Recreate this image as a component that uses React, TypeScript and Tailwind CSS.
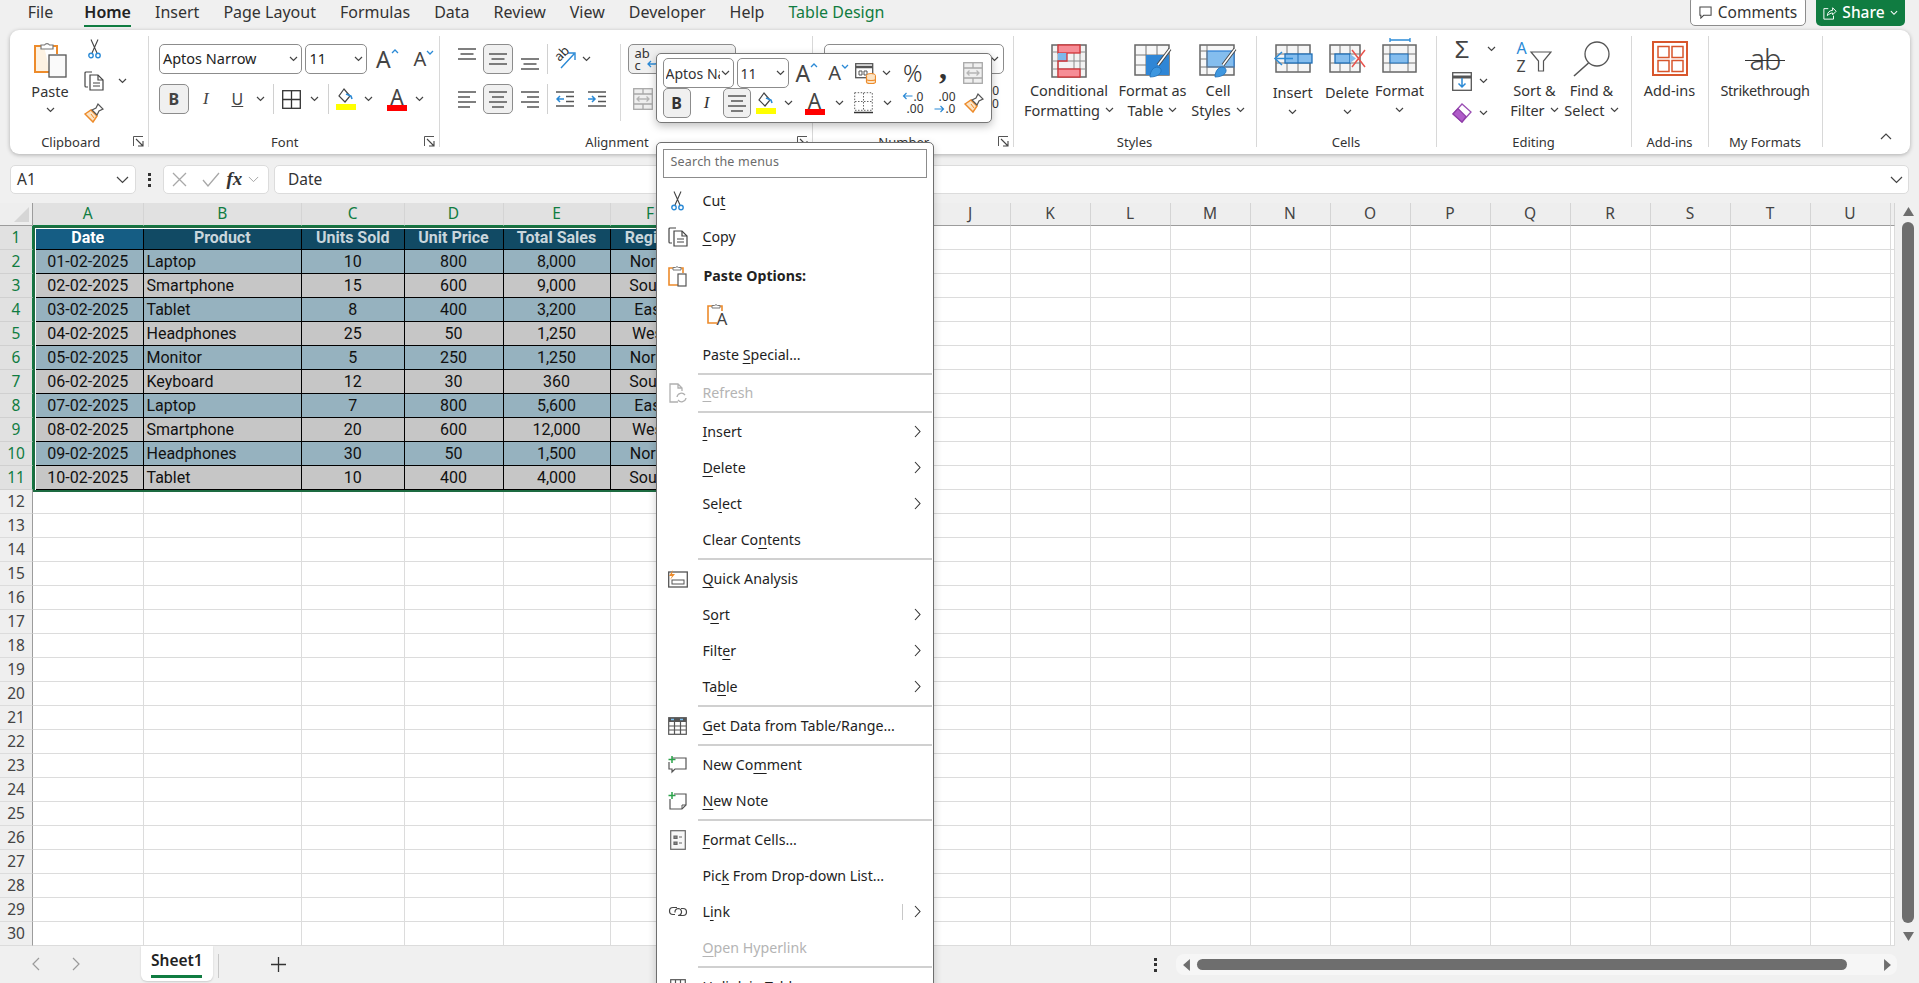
import React from "react";

type P = { className?: string; children?: React.ReactNode };

const BLUE = "#2b8ad6";
const OR = "#ed8b2b";

function Chev({ className = "" }: P) {
  return (
    <svg viewBox="0 0 9 6" className={"w-[9px] h-[6px] shrink-0 " + className}>
      <path d="M1 1l3.500 3.500L8 1" fill="none" stroke="#444" strokeWidth="1.200" />
    </svg>
  );
}
function S({ className = "", children }: P) {
  return <div className={"flex items-center justify-center shrink-0 h-[30px] " + className}>{children}</div>;
}
function Sep({ className = "h-[30px]" }: P) {
  return <div className={"w-[1px] bg-[#d0d0d0] shrink-0 " + className} />;
}
function Btn({ className = "", children }: P) {
  return <div className={"flex items-center justify-center shrink-0 h-[30px] rounded-[5px] border border-[#8c8c8c] bg-[#f0f0f0] " + className}>{children}</div>;
}

function PasteBig() {
  return (
    <svg viewBox="0 0 34 37" className="w-[34px] h-[37px]">
      <path d="M11 5H2v26h15" fill="#fdf2e2" stroke={OR} strokeWidth="2" />
      <path d="M18 5h6v8" fill="none" stroke={OR} strokeWidth="2" />
      <path d="M8 8V4h3.500a3 3 0 0 1 5 0H20v4z" fill="#fff" stroke="#777" strokeWidth="1.200" />
      <rect x="16" y="14" width="17" height="22" fill="#fafafa" stroke="#555" strokeWidth="1.300" />
    </svg>
  );
}
function Scissors({ className = "w-[13px] h-[20px]" }: P) {
  return (
    <svg viewBox="0 0 13 20" className={className}>
      <path d="M3 0.500L9 14M10 0.500L4 14" fill="none" stroke="#444" strokeWidth="1.100" />
      <circle cx="3" cy="16.500" r="2.200" fill="none" stroke={BLUE} strokeWidth="1.400" />
      <circle cx="10" cy="16.500" r="2.200" fill="none" stroke={BLUE} strokeWidth="1.400" />
    </svg>
  );
}
function Copy({ className = "w-[20px] h-[20px]" }: P) {
  return (
    <svg viewBox="0 0 20 20" className={className} fill="none" stroke="#444" strokeWidth="1.200">
      <path d="M8 1H2a1 1 0 0 0-1 1v13a1 1 0 0 0 1 1h2" />
      <path d="M6 4h8l5 5v10H6z" fill="#fff" />
      <path d="M14 4v5h5M9 12h7M9 15h7" />
    </svg>
  );
}
function Painter({ className = "w-[20px] h-[20px]" }: P) {
  return (
    <svg viewBox="0 0 20 20" className={className}>
      <path d="M1 11l6-4 6 6-4 6z" fill="#fbe3c4" stroke={OR} strokeWidth="1.500" />
      <path d="M4 14l3 3M7 11l3 4" stroke={OR} strokeWidth="1" />
      <path d="M8 7l4-2 2-4 5 5-4 2-2 4z" fill="#fff" stroke="#555" strokeWidth="1.200" />
    </svg>
  );
}
function Launcher() {
  return (
    <svg viewBox="0 0 11 11" className="w-[11px] h-[11px]" fill="none" stroke="#555" strokeWidth="1">
      <path d="M0.500 10V0.500H10" />
      <path d="M3 3l6.500 6.500M10 5v5H5" stroke="#444" strokeWidth="1.100" />
    </svg>
  );
}
function GrowA({ up, size = "text-[23px]", className = "" }: { up: boolean; size?: string; className?: string }) {
  return (
    <div className={"flex items-start " + className}>
      <span className={"leading-none text-[#444] " + size}>A</span>
      <svg viewBox="0 0 8 5" className="w-[8px] h-[5px] mt-[1px]">
        <path d={up ? "M1 4l3-3 3 3" : "M1 1l3 3 3-3"} fill="none" stroke={BLUE} strokeWidth="1.300" />
      </svg>
    </div>
  );
}
function Borders({ className = "w-[19px] h-[19px]" }: P) {
  return (
    <svg viewBox="0 0 19 19" className={className} fill="none" stroke="#333" strokeWidth="1.300">
      <rect x="0.700" y="0.700" width="17.600" height="17.600" />
      <path d="M9.500 1v17M1 9.500h17" />
    </svg>
  );
}
function DottedBorders() {
  return (
    <svg viewBox="0 0 19 22" className="w-[19px] h-[22px]" fill="none" stroke="#666" strokeWidth="1" strokeDasharray="1.500 1.500">
      <rect x="0.700" y="0.700" width="17.600" height="17.600" />
      <path d="M9.500 1v17M1 9.500h17" />
      <path d="M0 20.500h19" strokeDasharray="0" strokeWidth="1.500" stroke="#333" />
    </svg>
  );
}
function Fill() {
  return (
    <svg viewBox="0 0 20 22" className="w-[20px] h-[22px]">
      <path d="M8 1l-5 7 6 6 5-6z" fill="#fff" stroke="#444" strokeWidth="1.200" />
      <path d="M10 6l5 2 1 3" fill="none" stroke={BLUE} strokeWidth="1.600" />
      <rect x="0" y="16" width="20" height="6" fill="#ffff00" />
    </svg>
  );
}
function ColorA() {
  return (
    <div className="flex flex-col items-center w-[20px]">
      <span className="text-[21px] leading-[20px] h-[17px] text-[#444]">A</span>
      <div className="w-[20px] h-[6px] bg-[#ff0000] mt-[1px]" />
    </div>
  );
}
function Lines({ kind }: { kind: "top" | "mid" | "bot" | "l" | "c" | "r" }) {
  if (kind === "top" || kind === "mid" || kind === "bot") {
    return (
      <svg viewBox="0 0 18 12" className="w-[18px] h-[12px]" stroke="#555" strokeWidth="1.300">
        <path d="M0 1h18M2.500 6h13M0 11h18" />
      </svg>
    );
  }
  const d =
    kind === "l" ? "M0 1h18M0 6h12M0 11h18M0 16h12" : kind === "c" ? "M0 1h18M3 6h12M0 11h18M3 16h12" : "M0 1h18M6 6h12M0 11h18M6 16h12";
  return (
    <svg viewBox="0 0 18 17" className="w-[18px] h-[17px]" stroke="#555" strokeWidth="1.300">
      <path d={d} />
    </svg>
  );
}
function Orient() {
  return (
    <div className="relative w-[22px] h-[20px]">
      <span className="absolute left-[0px] top-[-2px] text-[13px] leading-none text-[#333] -rotate-45">ab</span>
      <svg viewBox="0 0 22 20" className="w-[22px] h-[20px]">
        <path d="M7 19L20 5M14 4h7v7" fill="none" stroke={BLUE} strokeWidth="1.400" />
      </svg>
    </div>
  );
}
function Indent({ out }: { out?: boolean }) {
  return (
    <svg viewBox="0 0 18 16" className="w-[18px] h-[16px]">
      <path d="M0 1h18M10 5.500h8M10 10.500h8M0 15h18" stroke="#555" strokeWidth="1.300" />
      <path d={out ? "M8 8H1M4 5L1 8l3 3" : "M0 8h7M4 5l3 3-3 3"} fill="none" stroke={BLUE} strokeWidth="1.500" />
    </svg>
  );
}
function Merge() {
  return (
    <svg viewBox="0 0 20 22" className="w-[20px] h-[22px]" fill="none" stroke="#a8a8a8" strokeWidth="1.300">
      <rect x="0.700" y="0.700" width="18.600" height="20.600" fill="#efefef" />
      <path d="M1 6h18M1 16h18M10 1v5M10 16v5" />
      <path d="M4 11h12M6.500 8.500L4 11l2.500 2.500M13.500 8.500L16 11l-2.500 2.500" stroke="#b5b5b5" />
    </svg>
  );
}
function CondFmt() {
  return (
    <svg viewBox="0 0 36 34" className="w-[36px] h-[34px]" fill="none">
      <rect x="1" y="1" width="34" height="32" fill="#f3f3f3" stroke="#666" strokeWidth="1.500" />
      <path d="M7 1v32M29 1v32M23 1v32M1 8h34M1 17h34M1 25h34" stroke="#8a8a8a" />
      <rect x="7" y="1" width="22" height="8" fill="#f68d96" stroke="#d13438" strokeWidth="1.300" />
      <rect x="7" y="25" width="22" height="8" fill="#f68d96" stroke="#d13438" strokeWidth="1.300" />
      <rect x="7" y="9" width="9" height="8" fill="#7db8ea" />
      <path d="M16 9v8H7v8" stroke="#d13438" strokeWidth="1.300" />
    </svg>
  );
}
function FmtTable({ big }: { big?: boolean }) {
  return (
    <svg viewBox="0 0 38 36" className="w-[38px] h-[36px]" fill="none">
      <rect x="1" y="1" width="34" height="30" fill="#f7f7f7" stroke="#666" strokeWidth="1.500" />
      {big ? (
        <rect x="8" y="7" width="27" height="16" fill="#84bdee" stroke="#2b7cd3" strokeWidth="1.200" />
      ) : (
        <>
          <path d="M12 1v30M23 1v30M1 11h34M1 21h34" stroke="#777" />
          <rect x="12" y="11" width="23" height="20" fill="#2f86d6" />
        </>
      )}
      {big && <path d="M8 1v30M1 7h7M1 15h7M1 23h34" stroke="#777" />}
      <path d="M36 5L24 21" stroke="#444" strokeWidth="3.500" />
      <path d="M36 5L24 21" stroke="#fff" strokeWidth="1.500" />
      <path d="M16 33c0-7 5-12 10-9 3 3 0 9-10 9z" fill="#3e97e0" stroke="#1f6fb7" strokeWidth="0.800" />
    </svg>
  );
}
function InsertI() {
  return (
    <svg viewBox="0 0 40 29" className="w-[40px] h-[29px]" fill="none">
      <rect x="3" y="1" width="34" height="27" fill="#f5f5f5" stroke="#666" strokeWidth="1.500" />
      <path d="M14 1v27M25 1v27M3 10h34M3 19h34" stroke="#777" />
      <rect x="12" y="10" width="27" height="9" fill="#84bdee" stroke="#1f6fb7" strokeWidth="1.300" />
      <path d="M25 10v9" stroke="#1f6fb7" />
      <path d="M20 14.500H4M9 8l-7 6.500L9 21" stroke="#2b8ad6" strokeWidth="1.500" />
    </svg>
  );
}
function DeleteI() {
  return (
    <svg viewBox="0 0 37 29" className="w-[37px] h-[29px]" fill="none">
      <rect x="1" y="1" width="30" height="27" fill="#f5f5f5" stroke="#666" strokeWidth="1.500" />
      <path d="M11 1v27M21 1v27M1 10h30M1 19h30" stroke="#777" />
      <rect x="6" y="10" width="15" height="9" fill="#84bdee" stroke="#1f6fb7" strokeWidth="1.300" />
      <path d="M21 10l6 4.500-6 4.500z" fill="#84bdee" />
      <path d="M23 6l13 17M36 6L23 23" stroke="#e8534d" strokeWidth="1.500" />
    </svg>
  );
}
function FormatI() {
  return (
    <svg viewBox="0 0 35 35" className="w-[35px] h-[35px]" fill="none">
      <path d="M8 2h20M8 0v4M28 0v4" stroke={BLUE} strokeWidth="1.300" />
      <rect x="1" y="7" width="33" height="27" fill="#f5f5f5" stroke="#666" strokeWidth="1.500" />
      <path d="M8 7v27M26 7v27M1 16h33M1 25h33" stroke="#777" />
      <rect x="8" y="16" width="18" height="9" fill="#84bdee" stroke="#1f6fb7" />
    </svg>
  );
}
function Sigma() {
  return <span className="text-[24px] leading-[20px] text-[#444] font-['Liberation_Sans',sans-serif]">Σ</span>;
}
function FillDown() {
  return (
    <svg viewBox="0 0 20 19" className="w-[20px] h-[19px]" fill="none">
      <rect x="0.700" y="0.700" width="18.600" height="17.600" stroke="#555" strokeWidth="1.300" />
      <path d="M1 5h18" stroke="#555" strokeWidth="3" />
      <path d="M10 6v9M6.500 11.500L10 15l3.500-3.500" stroke={BLUE} strokeWidth="1.500" />
    </svg>
  );
}
function Eraser() {
  return (
    <svg viewBox="0 0 20 20" className="w-[20px] h-[20px]">
      <path d="M1 11l9-10 9 8-9 10z" fill="#fff" stroke="#9a4eb3" strokeWidth="1.300" />
      <path d="M1 11l5-5.500 8 8L10 19z" fill="#b05cc9" stroke="#8e3da8" strokeWidth="1.200" />
    </svg>
  );
}
function SortI() {
  return (
    <div className="relative w-[36px] h-[33px]">
      <span className="absolute left-[0px] top-[-3px] text-[16px] leading-[18px] text-[#2b8ad6]">A</span>
      <span className="absolute left-[0px] top-[15px] text-[16px] leading-[18px] text-[#444]">Z</span>
      <svg viewBox="0 0 36 33" className="w-[36px] h-[33px]" fill="none">
        <path d="M15 10h20l-7.500 9v10h-5V19z" fill="#fff" stroke="#555" strokeWidth="1.200" />
      </svg>
    </div>
  );
}
function Mag() {
  return (
    <svg viewBox="0 0 37 36" className="w-[37px] h-[36px]" fill="none">
      <circle cx="24" cy="13" r="12" fill="#fff" stroke="#555" strokeWidth="1.300" />
      <path d="M15.500 22L1 35" stroke="#555" strokeWidth="1.600" />
    </svg>
  );
}
function AddinsI() {
  return (
    <svg viewBox="0 0 36 35" className="w-[36px] h-[35px]" fill="none" stroke="#d8562c" strokeWidth="1.500">
      <rect x="1" y="1" width="34" height="33" strokeWidth="2" />
      <rect x="6" y="5.500" width="11" height="11" />
      <rect x="20" y="5.500" width="11" height="11" />
      <rect x="6" y="19.500" width="11" height="11" />
      <rect x="20" y="19.500" width="11" height="11" />
    </svg>
  );
}
function Strike() {
  return (
    <div className="relative w-[40px] h-[28px] flex items-center justify-center">
      <span className="text-[29px] leading-none text-[#444] tracking-[-1px] font-light">ab</span>
      <div className="absolute left-0 right-0 top-[16px] h-[1px] bg-[#333]" />
    </div>
  );
}
function XIcon() {
  return (
    <svg viewBox="0 0 15 15" className="w-[15px] h-[15px]" fill="none" stroke="#a8a8a8" strokeWidth="1.300">
      <path d="M1 1l13 13M14 1L1 14" />
    </svg>
  );
}
function Check() {
  return (
    <svg viewBox="0 0 18 15" className="w-[18px] h-[15px]" fill="none" stroke="#a8a8a8" strokeWidth="1.300">
      <path d="M1 8l5 6L17 1" />
    </svg>
  );
}
function VDots({ className = "" }: P) {
  return (
    <div className={"flex flex-col gap-[2.500px] " + className}>
      <div className="w-[3px] h-[3px] bg-[#333]" />
      <div className="w-[3px] h-[3px] bg-[#333]" />
      <div className="w-[3px] h-[3px] bg-[#333]" />
    </div>
  );
}

function Group({
  className,
  pad = "",
  label,
  labelCls = "",
  launcher,
  children,
}: {
  className: string;
  pad?: string;
  label?: string;
  labelCls?: string;
  launcher?: boolean;
  children?: React.ReactNode;
}) {
  return (
    <div className={"relative flex flex-col shrink-0 h-[111px] border-r border-[#d8d8d8] " + className}>
      <div className={"flex h-[96px] shrink-0 min-w-0 " + pad}>{children}</div>
      {label && <div className={"h-[15px] leading-[21px] text-center text-[13px] text-[#333] whitespace-nowrap " + labelCls}>{label}</div>}
      {launcher && (
        <div className="absolute right-[4px] bottom-[0px]">
          <Launcher />
        </div>
      )}
    </div>
  );
}

function Big({
  className,
  icon,
  l1,
  l2,
  chev,
  iconCls = "h-[44px] pt-[8px]",
  textCls = "",
}: {
  className: string;
  icon: React.ReactNode;
  l1: string;
  l2?: string;
  chev?: boolean;
  iconCls?: string;
  textCls?: string;
}) {
  return (
    <div className={"flex flex-col items-center shrink-0 text-[14.500px] text-[#333] " + className}>
      <div className={"flex items-start justify-center " + iconCls}>{icon}</div>
      <div className={"h-[20px] leading-[20px] whitespace-nowrap " + textCls}>{l1}</div>
      {l2 ? (
        <div className="h-[20px] leading-[20px] whitespace-nowrap flex items-center gap-[5px]">
          {l2}
          {chev && <Chev className="w-[8px]" />}
        </div>
      ) : (
        chev && (
          <div className="h-[20px] flex items-center">
            <Chev />
          </div>
        )
      )}
    </div>
  );
}

function Ribbon() {
  return (
    <div className="ml-[10px] mr-[9px] h-[124px] rounded-[9px] bg-white shadow-[0_1px_4px_rgba(0,0,0,0.28)] flex pt-[6px] shrink-0">
      <Group className="w-[138.500px]" label="Clipboard" labelCls="pr-[16px]" launcher>
        <div className="flex flex-col items-center w-[40px] ml-[20px] shrink-0 text-[14.500px] text-[#333]">
          <div className="mt-[5px] h-[37px]">
            <PasteBig />
          </div>
          <div className="mt-[3px] h-[20px] leading-[20px]">Paste</div>
          <div className="mt-[6px]">
            <Chev />
          </div>
        </div>
        <div className="flex flex-col ml-[14px] pt-[3px] items-start">
          <div className="h-[32px] w-[20px] flex justify-center">
            <Scissors />
          </div>
          <div className="h-[32px] flex items-start gap-[14px]">
            <Copy />
            <Chev className="mt-[7px]" />
          </div>
          <Painter />
        </div>
      </Group>

      <Group className="w-[291.500px]" pad="pl-[10.400px]" label="Font" labelCls="pr-[18px]" launcher>
        <div className="flex flex-col pt-[8px] gap-[10px]">
          <div className="flex items-center h-[30px]">
            <div className="w-[143.500px] h-[30px] rounded-[5px] border border-[#8c8c8c] flex items-center justify-between pl-[3px] pr-[3px] text-[14.500px] text-[#222]">
              Aptos Narrow
              <Chev />
            </div>
            <div className="ml-[3px] w-[61.500px] h-[30px] rounded-[5px] border border-[#8c8c8c] flex items-center justify-between pl-[3px] pr-[3px] text-[14.500px] text-[#222]">
              11
              <Chev />
            </div>
            <GrowA up className="ml-[9px]" />
            <GrowA up={false} size="text-[20px]" className="ml-[15px]" />
          </div>
          <div className="flex items-center h-[30px]">
            <Btn className="w-[30px] font-bold text-[16px] text-[#444]">B</Btn>
            <S className="w-[34px] italic text-[17px] text-[#444] font-['Liberation_Serif',serif]">I</S>
            <S className="w-[29px] underline text-[16px] text-[#444]">U</S>
            <S className="w-[18px]">
              <Chev />
            </S>
            <S className="w-[8px]">
              <Sep />
            </S>
            <S className="w-[27px]">
              <Borders />
            </S>
            <S className="w-[20px]">
              <Chev />
            </S>
            <S className="w-[7px]">
              <Sep />
            </S>
            <S className="w-[28px]">
              <Fill />
            </S>
            <S className="w-[18px]">
              <Chev />
            </S>
            <S className="w-[38px]">
              <ColorA />
            </S>
            <S className="w-[8px]">
              <Chev />
            </S>
          </div>
        </div>
      </Group>

      <Group className="w-[373px]" label="Alignment" labelCls="pr-[18px]" launcher>
        <div className="flex flex-col pt-[8px] gap-[10px] pl-[10px] w-[179.500px] shrink-0">
          <div className="flex items-center h-[30px]">
            <S className="w-[33px] pb-[10px]">
              <Lines kind="top" />
            </S>
            <Btn className="w-[30px]">
              <Lines kind="mid" />
            </Btn>
            <S className="w-[34px] pt-[10px]">
              <Lines kind="bot" />
            </S>
            <Sep />
            <S className="w-[34px]">
              <Orient />
            </S>
            <S className="w-[8px]">
              <Chev />
            </S>
          </div>
          <div className="flex items-center h-[30px]">
            <S className="w-[33px]">
              <Lines kind="l" />
            </S>
            <Btn className="w-[30px]">
              <Lines kind="c" />
            </Btn>
            <S className="w-[34px]">
              <Lines kind="r" />
            </S>
            <Sep />
            <S className="w-[33px]">
              <Indent out />
            </S>
            <S className="w-[32px]">
              <Indent />
            </S>
          </div>
        </div>
        <div className="mt-[8px] w-[1px] h-[77px] bg-[#d8d8d8] shrink-0" />
        <div className="flex flex-col pt-[8px] gap-[10px] pl-[7px]">
          <Btn className="w-[108px] justify-start pl-[6px] text-[13px] leading-[12px] text-[#333]">
            <span>
              ab
              <br />c
            </span>
            <svg viewBox="0 0 11 9" className="w-[11px] h-[9px] -ml-[3px] mt-[8px]">
              <path d="M10 0v3a2 2 0 0 1-2 2H1M4 2L1 5l3 3" fill="none" stroke={BLUE} strokeWidth="1.300" />
            </svg>
          </Btn>
          <S className="w-[30px]">
            <Merge />
          </S>
        </div>
      </Group>

      <Group className="w-[200.500px]" pad="pl-[11px]" label="Number" labelCls="pr-[18px]" launcher>
        <div className="flex flex-col pt-[8px] gap-[10px]">
          <div className="w-[180px] h-[30px] rounded-[5px] border border-[#8c8c8c] flex items-center justify-end pr-[4px]">
            <Chev />
          </div>
          <div className="w-[175px] h-[30px] flex flex-col items-end text-[12px] leading-[13px] text-[#333]">
            <div>.00</div>
            <div>.0</div>
          </div>
        </div>
      </Group>

      <Group className="w-[243px]" label="Styles">
        <Big className="w-[111px]" icon={<CondFmt />} l1="Conditional" l2="Formatting" chev />
        <Big className="w-[56px]" icon={<FmtTable />} l1="Format as" l2="Table" chev />
        <Big className="w-[75px]" icon={<FmtTable big />} l1="Cell" l2="Styles" chev />
      </Group>

      <Group className="w-[180px]" label="Cells">
        <Big className="w-[72.500px]" icon={<InsertI />} l1="Insert" chev iconCls="h-[46px] pt-[8px]" />
        <Big className="w-[36px]" icon={<DeleteI />} l1="Delete" chev iconCls="h-[46px] pt-[8px]" />
        <Big className="w-[69px]" icon={<FormatI />} l1="Format" chev iconCls="h-[44px] pt-[2px]" />
      </Group>

      <Group className="w-[195px]" pad="pl-[15.400px]" label="Editing">
        <div className="flex flex-col w-[65px] shrink-0 pt-[4px]">
          <div className="h-[32px] flex items-start">
            <div className="w-[20px] flex justify-center">
              <Sigma />
            </div>
            <Chev className="ml-[15px] mt-[6px]" />
          </div>
          <div className="h-[31px] flex items-start">
            <FillDown />
            <Chev className="ml-[7px] mt-[6px]" />
          </div>
          <div className="flex items-start">
            <Eraser />
            <Chev className="ml-[7px] mt-[7px]" />
          </div>
        </div>
        <Big className="w-[35px]" icon={<SortI />} l1="Sort &" l2="Filter" chev iconCls="h-[44px] pt-[6px]" />
        <Big className="w-[79px]" icon={<Mag />} l1="Find &" l2="Select" chev iconCls="h-[44px] pt-[5px]" />
      </Group>

      <Group className="w-[77px]" label="Add-ins">
        <Big className="w-full" icon={<AddinsI />} l1="Add-ins" iconCls="h-[44px] pt-[5px]" />
      </Group>
      <Group className="w-[114px]" label="My Formats">
        <Big className="w-full" icon={<Strike />} l1="Strikethrough" iconCls="h-[44px] pt-[8px]" textCls="tracking-[-0.4px]" />
      </Group>
      <div className="flex-1 flex justify-end items-end pr-[18px] pb-[7px] h-[111px]">
        <svg viewBox="0 0 12 7" className="w-[12px] h-[7px]">
          <path d="M1 6l5-5 5 5" fill="none" stroke="#444" strokeWidth="1.200" />
        </svg>
      </div>
    </div>
  );
}

const tabs = ["File", "Home", "Insert", "Page Layout", "Formulas", "Data", "Review", "View", "Developer", "Help", "Table Design"];

function TabsBar() {
  return (
    <div className="h-[30px] flex items-start shrink-0 pl-[27.700px] text-[16px] text-[#333]">
      <div className="flex gap-[24px] h-[30px]">
        {tabs.map((t) => (
          <div
            key={t}
            className={
              "leading-[25px] h-[26.500px] whitespace-nowrap " +
              (t === "Home" ? "ml-[7px] font-semibold border-b-[2.500px] border-[#107c41] text-[#222]" : t === "Table Design" ? "text-[#107c41]" : "")
            }
          >
            {t}
          </div>
        ))}
      </div>
      <div className="flex-1" />
      <div className="-mt-[4px] w-[116px] h-[30px] rounded-[5px] border border-[#8c8c8c] bg-white flex items-center justify-center gap-[6px] pt-[3px] text-[15.500px]">
        <svg viewBox="0 0 14 14" className="w-[13px] h-[13px]" fill="none" stroke="#444" strokeWidth="1.100">
          <path d="M1 1h12v9H5l-3 3v-3H1z" />
        </svg>
        Comments
      </div>
      <div className="ml-[10px] mr-[14px] -mt-[4px] w-[89px] h-[30px] rounded-[5px] bg-[#107c41] text-white font-medium flex items-center justify-center gap-[5px] pt-[3px] text-[15.500px]">
        <svg viewBox="0 0 16 16" className="w-[14px] h-[14px]" fill="none" stroke="#fff" strokeWidth="1.100">
          <path d="M6 3H1v12h11v-4M5 11c0-4 3-6 6-6V2l4 4-4 4V8c-2 0-4 1-6 3z" />
        </svg>
        Share
        <svg viewBox="0 0 9 6" className="w-[8px] h-[6px]">
          <path d="M1 1l3.500 3.500L8 1" fill="none" stroke="#fff" strokeWidth="1.200" />
        </svg>
      </div>
    </div>
  );
}

function FormulaBar() {
  return (
    <div className="flex items-center h-[29px] mt-[11px] ml-[10px] mr-[10px] shrink-0 text-[15.500px] text-[#333]">
      <div className="w-[126px] h-full rounded-[5px] bg-white border border-[#dcdcdc] flex items-center justify-between pl-[6px] pr-[6px]">
        A1
        <svg viewBox="0 0 13 8" className="w-[13px] h-[8px]">
          <path d="M1 1l5.500 5.500L12 1" fill="none" stroke="#444" strokeWidth="1.200" />
        </svg>
      </div>
      <div className="w-[26.500px] flex justify-center">
        <VDots />
      </div>
      <div className="w-[106px] h-full rounded-[5px] bg-white border border-[#dcdcdc] flex items-center pl-[8px]">
        <XIcon />
        <div className="ml-[15px]">
          <Check />
        </div>
        <span className="ml-[7px] italic font-bold text-[19px] font-['Liberation_Serif',serif] text-[#333]">fx</span>
        <svg viewBox="0 0 13 8" className="ml-[6px] w-[11px] h-[7px]">
          <path d="M1 1l5.500 5.500L12 1" fill="none" stroke="#a0a0a0" strokeWidth="1.100" />
        </svg>
      </div>
      <div className="ml-[5.500px] flex-1 h-full rounded-[5px] bg-white border border-[#dcdcdc] flex items-center justify-between pl-[13px] pr-[5px]">
        Date
        <svg viewBox="0 0 13 8" className="w-[13px] h-[8px]">
          <path d="M1 1l5.500 5.500L12 1" fill="none" stroke="#444" strokeWidth="1.200" />
        </svg>
      </div>
    </div>
  );
}

const letters = ["A", "B", "C", "D", "E", "F", "G", "H", "I", "J", "K", "L", "M", "N", "O", "P", "Q", "R", "S", "T", "U", ""];
const colW = [
  "w-[110.500px]",
  "w-[158.500px]",
  "w-[102.500px]",
  "w-[99px]",
  "w-[107px]",
  ...Array.from({ length: 16 }, () => "w-[80px]"),
  "w-[4.500px]",
];
const head = ["Date", "Product", "Units Sold", "Unit Price", "Total Sales", "Region"];
const rows = [
  ["01-02-2025", "Laptop", "10", "800", "8,000", "North"],
  ["02-02-2025", "Smartphone", "15", "600", "9,000", "South"],
  ["03-02-2025", "Tablet", "8", "400", "3,200", "East"],
  ["04-02-2025", "Headphones", "25", "50", "1,250", "West"],
  ["05-02-2025", "Monitor", "5", "250", "1,250", "North"],
  ["06-02-2025", "Keyboard", "12", "30", "360", "South"],
  ["07-02-2025", "Laptop", "7", "800", "5,600", "East"],
  ["08-02-2025", "Smartphone", "20", "600", "12,000", "West"],
  ["09-02-2025", "Headphones", "30", "50", "1,500", "North"],
  ["10-02-2025", "Tablet", "10", "400", "4,000", "South"],
];

function Sheet() {
  return (
    <div className="relative flex flex-col w-[1895px] shrink-0">
      <div className="flex h-[23px] shrink-0 text-[15.500px]">
        <div className="w-[33px] shrink-0 bg-[#eeeeee] border-b border-[#9c9c9c] border-r flex items-end justify-end pr-[3px] pb-[3px]">
          <svg viewBox="0 0 15 15" className="w-[15px] h-[15px]">
            <path d="M15 0v15H0z" fill="#d6d6d6" />
          </svg>
        </div>
        {letters.map((l, i) => (
          <div
            key={i}
            className={
              "shrink-0 flex items-center justify-center border-b border-r border-r-[#d4d4d4] " +
              colW[i] +
              (i < 6 ? " bg-[#e1e1e1] text-[#107c41] border-b-[#107c41]" : " bg-[#eeeeee] text-[#444] border-b-[#9c9c9c]")
            }
          >
            {l}
          </div>
        ))}
      </div>
      {Array.from({ length: 30 }, (_, r) => (
        <div key={r} className="flex h-[24px] shrink-0">
          <div
            className={
              "w-[33px] shrink-0 flex items-center justify-center text-[15.500px] border-r border-b " +
              (r < 11 ? "bg-[#e1e1e1] text-[#107c41] border-r-[#107c41] border-b-[#d0d0d0]" : "bg-[#efefef] text-[#444] border-r-[#9c9c9c] border-b-[#dcdcdc]")
            }
          >
            {r + 1}
          </div>
          {letters.map((_l, c) => {
            const inTable = r < 11 && c < 6;
            if (!inTable) {
              return <div key={c} className={"shrink-0 border-r border-b border-[#dcdcdc] bg-white " + colW[c]} />;
            }
            const text = r === 0 ? head[c] : rows[r - 1][c];
            const bg =
              r === 0 ? (c === 0 ? "bg-[#155d84] text-white" : "bg-[#114a64] text-[#c9d6dc]") : r % 2 === 1 ? "bg-[#96b2bf] text-[#111]" : "bg-[#c6c6c6] text-[#111]";
            const align = r > 0 && c === 1 ? "justify-start pl-[3px]" : "justify-center";
            return (
              <div
                key={c}
                className={
                  "shrink-0 flex items-center overflow-hidden whitespace-nowrap border-r border-b border-black font-['Roboto',sans-serif] text-[16px] pt-[1px] " +
                  (r === 0 ? "font-bold " : "") +
                  bg +
                  " " +
                  align +
                  " " +
                  colW[c]
                }
              >
                {text}
              </div>
            );
          })}
        </div>
      ))}
      <div className="absolute left-[32.500px] top-[22.500px] w-[660px] h-[266px] border-[2.500px] border-[#1d6b41] pointer-events-none">
        <div className="w-full h-full border border-white border-r-0 border-b-0" />
      </div>
    </div>
  );
}

function VScroll() {
  return (
    <div className="w-[24px] shrink-0 flex flex-col items-center pt-[4px] pl-[2px] pb-[5px] gap-[6px]">
      <svg viewBox="0 0 10 8" className="w-[11px] h-[9px] shrink-0">
        <path d="M5 0l5 8H0z" fill="#6e6e6e" />
      </svg>
      <div className="w-[12px] flex-1 rounded-full bg-[#6e6e6e]" />
      <svg viewBox="0 0 10 8" className="w-[11px] h-[9px] shrink-0 mt-[3px]">
        <path d="M5 8l5-8H0z" fill="#6e6e6e" />
      </svg>
    </div>
  );
}

function BottomBar() {
  return (
    <div className="flex h-[38px] shrink-0">
      <div className="w-[140.700px] shrink-0 flex items-center h-[36px] pl-[32px] gap-[32px]">
        <svg viewBox="0 0 8 14" className="w-[8px] h-[14px]">
          <path d="M7 1L1 7l6 6" fill="none" stroke="#9a9a9a" strokeWidth="1.200" />
        </svg>
        <svg viewBox="0 0 8 14" className="w-[8px] h-[14px]">
          <path d="M1 1l6 6-6 6" fill="none" stroke="#9a9a9a" strokeWidth="1.200" />
        </svg>
      </div>
      <div className="w-[72.300px] h-[35px] shrink-0 rounded-b-[6px] bg-white shadow-[0_1px_2px_rgba(0,0,0,0.15)] flex flex-col items-center pt-[2px]">
        <div className="h-[27px] leading-[25px] font-semibold text-[15.500px] text-[#222]">Sheet1</div>
        <div className="w-[51px] h-[2.500px] bg-[#107c41]" />
      </div>
      <div className="ml-[5px] mt-[8px] w-[1px] h-[24px] bg-[#c8c8c8]" />
      <div className="w-[120px] flex items-center justify-center h-[36px]">
        <svg viewBox="0 0 15 15" className="w-[15px] h-[15px]" stroke="#333" strokeWidth="1.300">
          <path d="M7.500 0v15M0 7.500h15" />
        </svg>
      </div>
      <div className="flex-1" />
      <div className="w-[3px] mr-[19px] flex items-center h-[37px]">
        <VDots />
      </div>
      <div className="w-[721px] h-[21px] mt-[8px] rounded-[8px] bg-[#f6f6f6] flex items-center pl-[7px] pr-[6px] mr-[22px]">
        <svg viewBox="0 0 8 14" className="w-[7px] h-[12px] shrink-0">
          <path d="M8 0v14L0 7z" fill="#6e6e6e" />
        </svg>
        <div className="ml-[7px] w-[650px] h-[11px] rounded-full bg-[#6e6e6e]" />
        <div className="flex-1" />
        <svg viewBox="0 0 8 14" className="w-[7px] h-[12px] shrink-0">
          <path d="M0 0v14l8-7z" fill="#6e6e6e" />
        </svg>
      </div>
    </div>
  );
}

function MiniToolbar() {
  return (
    <div className="absolute left-[655.500px] top-[53px] w-[336px] h-[70px] rounded-[5px] border border-[#777] bg-white shadow-[0_3px_8px_rgba(0,0,0,0.25)] flex flex-col pl-[6px] pt-[4px] text-[#333]">
      <div className="flex items-center h-[30px]">
        <div className="w-[71px] h-[30px] rounded-[5px] border border-[#8c8c8c] flex items-center justify-between pl-[2px] pr-[3px] text-[14px] whitespace-nowrap overflow-hidden">
          <span className="overflow-hidden w-[54px]">Aptos Narrow</span>
          <Chev />
        </div>
        <div className="ml-[3px] w-[52px] h-[30px] rounded-[5px] border border-[#8c8c8c] flex items-center justify-between pl-[3px] pr-[3px] text-[14px]">
          11
          <Chev />
        </div>
        <GrowA up className="ml-[7px]" />
        <GrowA up={false} size="text-[20px]" className="ml-[10px]" />
        <div className="ml-[6px]">
          <svg viewBox="0 0 21 21" className="w-[21px] h-[21px]" fill="none">
            <rect x="0.700" y="0.700" width="17" height="14" fill="#fff" stroke="#555" strokeWidth="1.300" />
            <path d="M1 4h17" stroke="#555" strokeWidth="2.500" />
            <path d="M4 8h3v4H4zM9 8h3v4H9z" stroke="#555" />
            <ellipse cx="16" cy="12.500" rx="4.500" ry="2" fill="#fbe3c4" stroke={OR} />
            <path d="M11.500 12.500V19c0 2.200 9 2.200 9 0v-6.500M11.500 16c0 2 9 2 9 0" fill="#fbe3c4" stroke={OR} strokeWidth="1.200" />
          </svg>
        </div>
        <Chev className="ml-[6px]" />
        <span className="ml-[12px] text-[24px] leading-none font-light w-[22px]">%</span>
        <span className="ml-[14px] text-[32px] leading-[20px] font-bold font-['Liberation_Serif',serif] h-[30px]">,</span>
        <div className="ml-[16px]">
          <Merge />
        </div>
      </div>
      <div className="flex items-center h-[30px]">
        <Btn className="w-[28px] font-bold text-[16px]">B</Btn>
        <S className="w-[32px] italic text-[17px] font-['Liberation_Serif',serif]">I</S>
        <Btn className="w-[28px]">
          <Lines kind="c" />
        </Btn>
        <S className="w-[30px]">
          <Fill />
        </S>
        <S className="w-[16px]">
          <Chev />
        </S>
        <S className="w-[36px]">
          <ColorA />
        </S>
        <S className="w-[14px]">
          <Chev />
        </S>
        <S className="w-[34px]">
          <DottedBorders />
        </S>
        <S className="w-[14px]">
          <Chev />
        </S>
        <S className="w-[36px] text-[12px] leading-[12px]">
          <div className="relative w-[22px] h-[24px]">
            <span className="absolute right-0 top-0">.0</span>
            <span className="absolute right-0 top-[12px]">.00</span>
            <svg viewBox="0 0 10 8" className="absolute left-0 top-[1px] w-[11px] h-[8px]">
              <path d="M10 4H1M4 1L1 4l3 3" fill="none" stroke={BLUE} strokeWidth="1.200" />
            </svg>
          </div>
        </S>
        <S className="w-[28px] text-[12px] leading-[12px]">
          <div className="relative w-[22px] h-[24px]">
            <span className="absolute right-0 top-0">.00</span>
            <span className="absolute right-0 top-[12px]">.0</span>
            <svg viewBox="0 0 10 8" className="absolute left-0 top-[14px] w-[11px] h-[8px]">
              <path d="M0 4h9M6 1l3 3-3 3" fill="none" stroke={BLUE} strokeWidth="1.200" />
            </svg>
          </div>
        </S>
        <S className="w-[31px]">
          <Painter />
        </S>
      </div>
    </div>
  );
}

function M({ pre, u, post }: { pre: string; u: string; post?: string }) {
  return (
    <span>
      {pre}
      <span className="underline underline-offset-[3px]">{u}</span>
      {post}
    </span>
  );
}
function Arrow() {
  return (
    <svg viewBox="0 0 7 13" className="w-[7px] h-[13px] shrink-0">
      <path d="M1 1l5 5.500L1 12" fill="none" stroke="#333" strokeWidth="1.100" />
    </svg>
  );
}
function Item({ icon, children, arrow, dim, link }: { icon?: React.ReactNode; children: React.ReactNode; arrow?: boolean; dim?: boolean; link?: boolean }) {
  return (
    <div className={"flex items-center h-[36px] shrink-0 " + (dim ? "text-[#b4b4b4]" : "text-[#1e1e1e]")}>
      <div className="w-[46px] shrink-0 flex justify-center pr-[4px]">{icon}</div>
      <div className="flex-1 whitespace-nowrap">{children}</div>
      {link && <div className="w-[1px] h-[16px] bg-[#c8c8c8] mr-[11px]" />}
      {arrow && (
        <div className="mr-[12px]">
          <Arrow />
        </div>
      )}
    </div>
  );
}
function MSep({ className = "" }: P) {
  return (
    <div className={"h-[3px] shrink-0 flex items-center pl-[41px] pr-[1px] " + className}>
      <div className="h-[1.500px] w-full bg-[#d0d0d0]" />
    </div>
  );
}
function SmallClip({ a }: { a?: boolean }) {
  return (
    <svg viewBox="0 0 20 22" className="w-[20px] h-[22px]" fill="none">
      <path d="M5 3H1v17h9" stroke={OR} strokeWidth="1.600" />
      <path d="M11 3h4v5" stroke={OR} strokeWidth="1.600" />
      <path d="M5 5V2.500h2.500a2 2 0 0 1 3 0H13V5z" fill="#fff" stroke="#777" />
      {!a && <rect x="10" y="9" width="8" height="12" fill="#fff" stroke="#555" strokeWidth="1.200" />}
    </svg>
  );
}

function ContextMenu() {
  return (
    <div className="absolute left-[655.500px] top-[142px] w-[278.500px] h-[860px] rounded-t-[5px] border border-[#6e6e6e] bg-white flex flex-col pt-[6px] text-[14.200px] shadow-[0_3px_8px_rgba(0,0,0,0.2)]">
      <div className="mx-[6px] h-[29px] shrink-0 border border-[#8c8c8c] flex items-start pl-[7px] text-[12.500px] leading-[23px] tracking-[0.2px] text-[#6b6b6b]">Search the menus</div>
      <div className="h-[5px] shrink-0" />
      <Item icon={<Scissors />}>
        <M pre="Cu" u="t" />
      </Item>
      <Item icon={<Copy />}>
        <M pre="" u="C" post="opy" />
      </Item>
      <div className="h-[2px] shrink-0" />
      <div className="flex items-center h-[38px] shrink-0 font-bold text-[#222]">
        <div className="w-[46px] flex justify-center pr-[4px]">
          <SmallClip />
        </div>
        <span className="ml-[1px]">Paste Options:</span>
      </div>
      <div className="h-[38px] shrink-0 pl-[50px] pt-[8px] relative">
        <SmallClip a />
        <span className="absolute left-[60px] top-[14px] text-[17px] leading-[20px] text-[#444]">A</span>
      </div>
      <div className="h-[3.500px] shrink-0" />
      <Item>
        <M pre="Paste " u="S" post="pecial..." />
      </Item>
      <MSep className="-mb-[1px]" />
      <Item
        dim
        icon={
          <svg viewBox="0 0 18 20" className="w-[18px] h-[20px]" fill="none" stroke="#b0b0b0" strokeWidth="1.300">
            <path d="M9 19H1V1h8l4 4v3M9 1v4h4" />
            <path d="M8 14a4.500 4.500 0 0 1 8-2M17 15a4.500 4.500 0 0 1-8 2" />
          </svg>
        }
      >
        <M pre="" u="R" post="efresh" />
      </Item>
      <MSep />
      <Item arrow>
        <M pre="" u="I" post="nsert" />
      </Item>
      <Item arrow>
        <M pre="" u="D" post="elete" />
      </Item>
      <Item arrow>
        <M pre="Se" u="l" post="ect" />
      </Item>
      <Item>
        <M pre="Clear Co" u="n" post="tents" />
      </Item>
      <MSep />
      <Item
        icon={
          <svg viewBox="0 0 20 18" className="w-[20px] h-[18px]" fill="none">
            <rect x="0.700" y="2" width="18.600" height="15" fill="#fff" stroke="#555" strokeWidth="1.300" />
            <rect x="4" y="10" width="12" height="4" stroke="#555" />
            <path d="M5 0L1 6h3L2 10l5-6H4z" fill={OR} />
          </svg>
        }
      >
        <M pre="" u="Q" post="uick Analysis" />
      </Item>
      <Item arrow>
        <M pre="S" u="o" post="rt" />
      </Item>
      <Item arrow>
        <M pre="Filt" u="e" post="r" />
      </Item>
      <Item arrow>
        <M pre="Ta" u="b" post="le" />
      </Item>
      <MSep />
      <Item
        icon={
          <svg viewBox="0 0 19 18" className="w-[19px] h-[18px]" fill="none" stroke="#555" strokeWidth="1.200">
            <rect x="0.700" y="0.700" width="17.600" height="16.600" />
            <path d="M1 3h17" stroke="#555" strokeWidth="4" />
            <path d="M1 9h17M1 13h17M6.500 5v12M12.500 5v12" />
            <path d="M3 2.500h3M12 2.500h3" stroke="#7cc0f0" strokeWidth="1.500" />
          </svg>
        }
      >
        <M pre="" u="G" post="et Data from Table/Range..." />
      </Item>
      <MSep />
      <Item
        icon={
          <svg viewBox="0 0 19 18" className="w-[19px] h-[18px]" fill="none">
            <path d="M4 2h14v11H7l-3 3v-3H1V6" stroke="#555" strokeWidth="1.200" />
            <path d="M4 0v7M0.500 3.500h7" stroke="#2aa24a" strokeWidth="1.500" />
          </svg>
        }
      >
        <M pre="New Co" u="m" post="ment" />
      </Item>
      <Item
        icon={
          <svg viewBox="0 0 19 18" className="w-[19px] h-[18px]" fill="none">
            <path d="M6 2h12v11l-4 4H2V7" stroke="#555" strokeWidth="1.200" />
            <path d="M18 13h-4v4" stroke="#555" />
            <path d="M4 0v7M0.500 3.500h7" stroke="#2aa24a" strokeWidth="1.500" />
          </svg>
        }
      >
        <M pre="" u="N" post="ew Note" />
      </Item>
      <MSep />
      <Item
        icon={
          <svg viewBox="0 0 16 20" className="w-[16px] h-[20px]" fill="none" stroke="#666" strokeWidth="1.200">
            <rect x="0.700" y="0.700" width="14.600" height="18.600" fill="#f7f7f7" />
            <path d="M4 6h3v2.500H4zM4 12h3v2.500H4zM9 7h3M9 13h3" fill="#888" />
          </svg>
        }
      >
        <M pre="" u="F" post="ormat Cells..." />
      </Item>
      <Item>
        <M pre="Pic" u="k" post=" From Drop-down List..." />
      </Item>
      <Item
        arrow
        link
        icon={
          <svg viewBox="0 0 20 13" className="w-[20px] h-[13px]" fill="none" stroke="#444" strokeWidth="1.200">
            <path d="M9 2.500H5a3.500 3.500 0 0 0 0 7h2" />
            <path d="M11 10.500h4a3.500 3.500 0 0 0 0-7h-2" />
            <path d="M7 7.500a3.500 3.500 0 0 1 3.500-4 3.500 3.500 0 0 1 3 4 3.500 3.500 0 0 1-3.500 3" />
          </svg>
        }
      >
        <M pre="L" u="i" post="nk" />
      </Item>
      <Item dim>
        <M pre="" u="O" post="pen Hyperlink" />
      </Item>
      <MSep />
      <Item
        icon={
          <svg viewBox="0 0 16 16" className="w-[16px] h-[16px]" fill="none" stroke="#555" strokeWidth="1.200">
            <rect x="0.700" y="0.700" width="14.600" height="14.600" />
            <path d="M5.500 1v14M10.500 1v14" />
          </svg>
        }
      >
        <M pre="" u="U" post="nlink in Table" />
      </Item>
    </div>
  );
}

export default function App() {
  return (
    <div className="relative w-[1919px] h-[983px] overflow-hidden bg-[#f0f0f0] flex flex-col font-['Noto_Sans',sans-serif]">
      <TabsBar />
      <Ribbon />
      <FormulaBar />
      <div className="flex mt-[9px] h-[743px] shrink-0">
        <Sheet />
        <VScroll />
      </div>
      <BottomBar />
      <MiniToolbar />
      <ContextMenu />
    </div>
  );
}
